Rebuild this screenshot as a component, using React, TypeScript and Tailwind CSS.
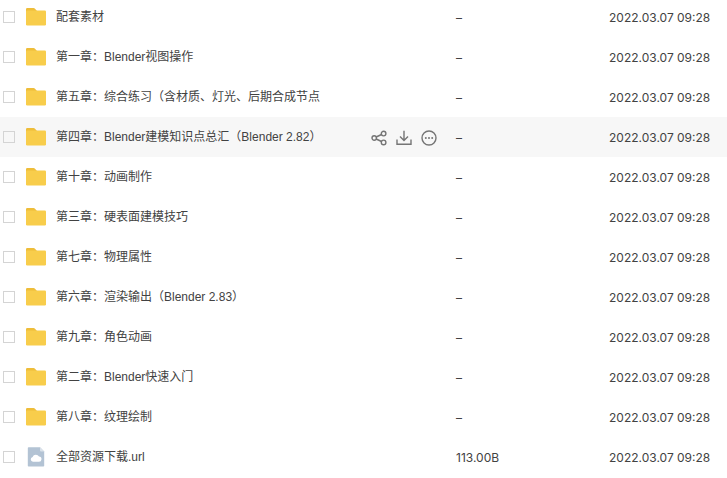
import React, { useState } from 'react';

interface FileItem {
  id: number;
  name: string;
  type: 'folder' | 'url';
  size: string;
  date: string;
}

const FILES: FileItem[] = [
  { id: 1, name: '配套素材', type: 'folder', size: '–', date: '2022.03.07 09:28' },
  { id: 2, name: '第一章：Blender视图操作', type: 'folder', size: '–', date: '2022.03.07 09:28' },
  { id: 3, name: '第五章：综合练习（含材质、灯光、后期合成节点', type: 'folder', size: '–', date: '2022.03.07 09:28' },
  { id: 4, name: '第四章：Blender建模知识点总汇（Blender 2.82）', type: 'folder', size: '–', date: '2022.03.07 09:28' },
  { id: 5, name: '第十章：动画制作', type: 'folder', size: '–', date: '2022.03.07 09:28' },
  { id: 6, name: '第三章：硬表面建模技巧', type: 'folder', size: '–', date: '2022.03.07 09:28' },
  { id: 7, name: '第七章：物理属性', type: 'folder', size: '–', date: '2022.03.07 09:28' },
  { id: 8, name: '第六章：渲染输出（Blender 2.83）', type: 'folder', size: '–', date: '2022.03.07 09:28' },
  { id: 9, name: '第九章：角色动画', type: 'folder', size: '–', date: '2022.03.07 09:28' },
  { id: 10, name: '第二章：Blender快速入门', type: 'folder', size: '–', date: '2022.03.07 09:28' },
  { id: 11, name: '第八章：纹理绘制', type: 'folder', size: '–', date: '2022.03.07 09:28' },
  { id: 12, name: '全部资源下载.url', type: 'url', size: '113.00B', date: '2022.03.07 09:28' },
];

function FolderIcon() {
  return (
    <svg className="w-5 h-5 shrink-0" viewBox="0 0 20 20">
      <path d="M0 2.2Q0 1 1.2 1H7.6Q8.3 1 8.8 1.6L11 4V9H0Z" fill="#eebd3a" />
      <path d="M0 4.6Q0 3.4 1.2 3.4H18.8Q20 3.4 20 4.6V17.2Q20 18.4 18.8 18.4H1.2Q0 18.4 0 17.2Z" fill="#f8cd4b" />
    </svg>
  );
}

function UrlIcon() {
  return (
    <svg className="w-5 h-5 shrink-0" viewBox="0 0 20 20">
      <path d="M1.8 1Q1.8 0.2 2.6 0.2H14L18.2 4.4V18.8Q18.2 19.6 17.4 19.6H2.6Q1.8 19.6 1.8 18.8Z" fill="#b3c3d4" />
      <path d="M14 0.2L18.2 4.4H14.8Q14 4.4 14 3.6Z" fill="#dae2ea" />
      <path d="M7 14.8A2.5 2.5 0 0 1 6.6 9.9A3.5 3.5 0 0 1 13 9.6A2.6 2.6 0 0 1 12.8 14.8Z" fill="#fff" />
    </svg>
  );
}

function ShareIcon() {
  return (
    <svg className="w-4 h-4" viewBox="0 0 16 16" fill="none" stroke="#757575" strokeWidth="1.4">
      <circle cx="3.2" cy="8" r="2.2" />
      <circle cx="12.6" cy="3.6" r="2.3" />
      <circle cx="12.6" cy="12.4" r="2.3" />
      <path d="M5.2 7L10.5 4.5M5.2 9L10.5 11.5" />
    </svg>
  );
}

function DownloadIcon() {
  return (
    <svg className="w-4 h-4" viewBox="0 0 16 16" fill="none" stroke="#757575" strokeWidth="1.4">
      <path d="M8 0.8V10.2M4 6.4L8 10.4L12 6.4M1 9.6V14.3H15V9.6" />
    </svg>
  );
}

function MoreIcon() {
  return (
    <svg className="w-4 h-4" viewBox="0 0 16 16">
      <circle cx="8" cy="8" r="7" fill="none" stroke="#757575" strokeWidth="1.4" />
      <circle cx="4.8" cy="8" r="1" fill="#757575" />
      <circle cx="8" cy="8" r="1" fill="#757575" />
      <circle cx="11.2" cy="8" r="1" fill="#757575" />
    </svg>
  );
}

export default function App() {
  const [checked, setChecked] = useState<number[]>([]);
  const [activeId, setActiveId] = useState(4);

  const toggle = (id: number) => {
    setChecked((prev) => (prev.includes(id) ? prev.filter((x) => x !== id) : [...prev, id]));
  };

  return (
    <main className="overflow-hidden bg-white pb-1 font-['Liberation_Sans','Noto_Sans_CJK_SC',sans-serif] text-xs text-[#424242]">
      {/* The list is scrolled a little under its top edge */}
      <table className="-mt-[3px] w-full table-fixed border-collapse">
        <colgroup>
          <col />
          <col className="w-[153px]" />
          <col className="w-[118px]" />
        </colgroup>
        <tbody>
          {FILES.map((file) => (
            <tr
              key={file.id}
              onClick={() => setActiveId(file.id)}
              className={`h-10 ${activeId === file.id ? 'bg-[#f7f7f7]' : 'bg-white'}`}
            >
              <td className="p-0 pl-[3px]">
                <div className="flex items-center">
                  <input
                    id={`file-${file.id}`}
                    type="checkbox"
                    checked={checked.includes(file.id)}
                    onChange={() => toggle(file.id)}
                    className="w-3 h-3 shrink-0 appearance-none border border-[#d4d4d4] checked:bg-blue-500"
                  />
                  <span className="ml-[11px] mr-[10px] flex">
                    {file.type === 'folder' ? <FolderIcon /> : <UrlIcon />}
                  </span>
                  <label htmlFor={`file-${file.id}`} className="flex-1 truncate">
                    {file.name}
                  </label>
                  {activeId === file.id && (
                    <div className="mr-[19px] flex gap-[9px] pt-0.5">
                      <button type="button" aria-label="分享"><ShareIcon /></button>
                      <button type="button" aria-label="下载"><DownloadIcon /></button>
                      <button type="button" aria-label="更多"><MoreIcon /></button>
                    </div>
                  )}
                </div>
              </td>
              <td className="p-0 pt-0.5 font-['Inter',sans-serif]">{file.size}</td>
              <td className="p-0 pt-0.5 whitespace-nowrap font-['Inter',sans-serif]">{file.date}</td>
            </tr>
          ))}
        </tbody>
      </table>
    </main>
  );
}
